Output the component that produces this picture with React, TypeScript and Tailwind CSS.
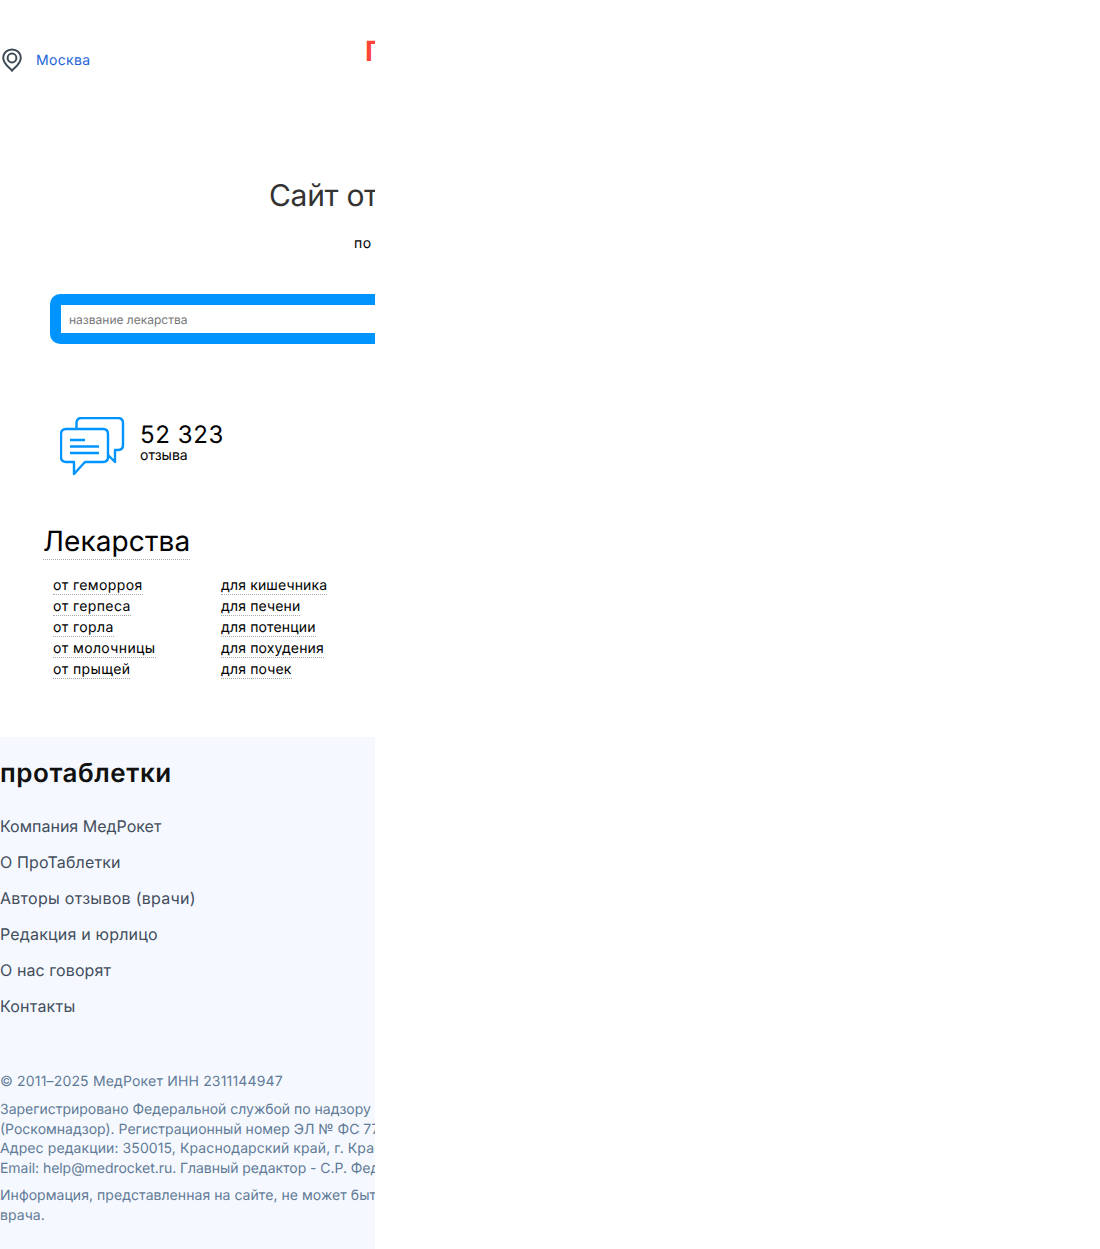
const leftLinks = ['от геморроя', 'от герпеса', 'от горла', 'от молочницы', 'от прыщей'];
const rightLinks = ['для кишечника', 'для печени', 'для потенции', 'для похудения', 'для почек'];
const footerLinks = [
  { title: 'Компания МедРокет', spacing: 'tracking-normal' },
  { title: 'О ПроТаблетки', spacing: 'tracking-[0.15px]' },
  { title: 'Авторы отзывов (врачи)', spacing: 'tracking-[0.27px]' },
  { title: 'Редакция и юрлицо', spacing: 'tracking-[0.18px]' },
  { title: 'О нас говорят', spacing: 'tracking-[0.08px]' },
  { title: 'Контакты', spacing: 'tracking-[0.2px]' },
];

function PinIcon() {
  return (
    <svg width="24" height="24" viewBox="0 0 24 24" fill="none" stroke="#3f4a57" strokeWidth="2">
      <path d="M12 22.8 C10.5 20.2 3.2 16.5 3.2 9.8 C3.2 5 7.2 1.4 12 1.4 C16.8 1.4 20.8 5 20.8 9.8 C20.8 16.5 13.5 20.2 12 22.8 Z" strokeLinejoin="round" />
      <circle cx="12" cy="10" r="4.4" />
    </svg>
  );
}

function ReviewsIcon() {
  return (
    <svg width="66" height="60" viewBox="0 0 66 60" fill="none" stroke="#0094ff" strokeWidth="2.4" strokeLinejoin="round">
      <path d="M16.5 11 V6 Q16.5 1 21.5 1 H58 Q63 1 63 6 V28 Q63 33 58 33 H55 V45 L48 38" />
      <path d="M6 12 H43 Q48 12 48 17 V40 Q48 45 43 45 H25 L14 57 V45 H6 Q1 45 1 40 V17 Q1 12 6 12 Z" />
      <path d="M10 23 H25 M10 29.5 H39 M10 36 H39" />
    </svg>
  );
}

export default function App() {
  return (
    <div className="w-[375px] h-[1249px] overflow-hidden bg-white font-['Inter',sans-serif] text-black [text-rendering:geometricPrecision]">
      <div className="h-[737px]">
        <div className="flex h-[122px] items-start pt-[37px]">
          <div className="flex items-start mt-[11px] w-[365px] shrink-0">
            <PinIcon />
            <span className="ml-3 mt-px text-[14px] leading-[24px] tracking-[0.33px] text-[#2563d8]">Москва</span>
          </div>
          <span className="text-[28px] leading-[28px] font-bold text-[#ff4438] whitespace-nowrap">ПроТаблетки</span>
        </div>
        <h1 className="pl-[269px] mt-[54px] text-[30px] leading-[40px] tracking-[-0.3px] text-[#333] whitespace-nowrap">Сайт отзывов врачей</h1>
        <p className="pl-[354px] mt-[18px] text-[14px] leading-[20px] tracking-[0.4px] whitespace-nowrap">по лекарствам</p>
        <div className="ml-[50px] mt-[40px] w-[700px] h-[50px] rounded-[10px] bg-[#0094ff] p-[11px]">
          <div className="h-[28px] bg-white pl-2 text-[12px] leading-[30px] text-[#777]">название лекарства</div>
        </div>
        <div className="flex ml-[60px] mt-[73px] h-[60px]">
          <ReviewsIcon />
          <div className="ml-[14px]">
            <div className="mt-[4px] text-[24px] leading-[28px] tracking-[0.6px]">52 323</div>
            <div className="text-[14px] leading-[14px]">отзыва</div>
          </div>
        </div>
        <h2 className="ml-[43px] mt-[47px] w-fit text-[28px] leading-[35px] tracking-[0.1px] border-b border-dotted border-[#aaa]">Лекарства</h2>
        <div className="flex ml-[53px] mt-[16px]">
          <ul className="w-[168px]">
            {leftLinks.map((t) => (
              <li key={t} className="h-[21px] text-[14px] leading-[19px] tracking-[0.38px]">
                <span className="border-b border-dotted border-[#aaa]">{t}</span>
              </li>
            ))}
          </ul>
          <ul>
            {rightLinks.map((t) => (
              <li key={t} className="h-[21px] text-[14px] leading-[19px] tracking-[0.15px]">
                <span className="border-b border-dotted border-[#aaa]">{t}</span>
              </li>
            ))}
          </ul>
        </div>
      </div>
      <footer className="h-[512px] bg-[#f5f9ff] overflow-hidden">
        <div className="h-[71px] pt-[19px] text-[26px] leading-[36px] font-semibold tracking-[0.55px] text-[#111] whitespace-nowrap">протаблетки</div>
        <ul>
          {footerLinks.map((l) => (
            <li key={l.title} className={`h-[36px] text-[16px] leading-[36px] text-[#434d5c] ${l.spacing}`}>{l.title}</li>
          ))}
        </ul>
        <div className="mt-[48px] text-[14px] leading-[20px] tracking-[0.17px] text-[#617a96] whitespace-nowrap">© 2011–2025 МедРокет ИНН 2311144947</div>
        <div className="mt-[8px] text-[14px] leading-[19.6px] text-[#617a96] whitespace-nowrap">
          <div className="tracking-[-0.02px]">Зарегистрировано Федеральной службой по надзору в сфере связи</div>
          <div>(Роскомнадзор). Регистрационный номер ЭЛ № ФС 77-82970</div>
          <div className="tracking-[0.1px]">Адрес редакции: 350015, Краснодарский край, г. Краснодар</div>
          <div className="tracking-[-0.05px]">Email: help@medrocket.ru. Главный редактор - С.Р. Федосеев</div>
        </div>
        <div className="mt-[8px] text-[14px] leading-[19.6px] tracking-[0.05px] text-[#617a96] whitespace-nowrap">
          <div>Информация, представленная на сайте, не может быть заменой консультации</div>
          <div>врача.</div>
        </div>
      </footer>
    </div>
  );
}
